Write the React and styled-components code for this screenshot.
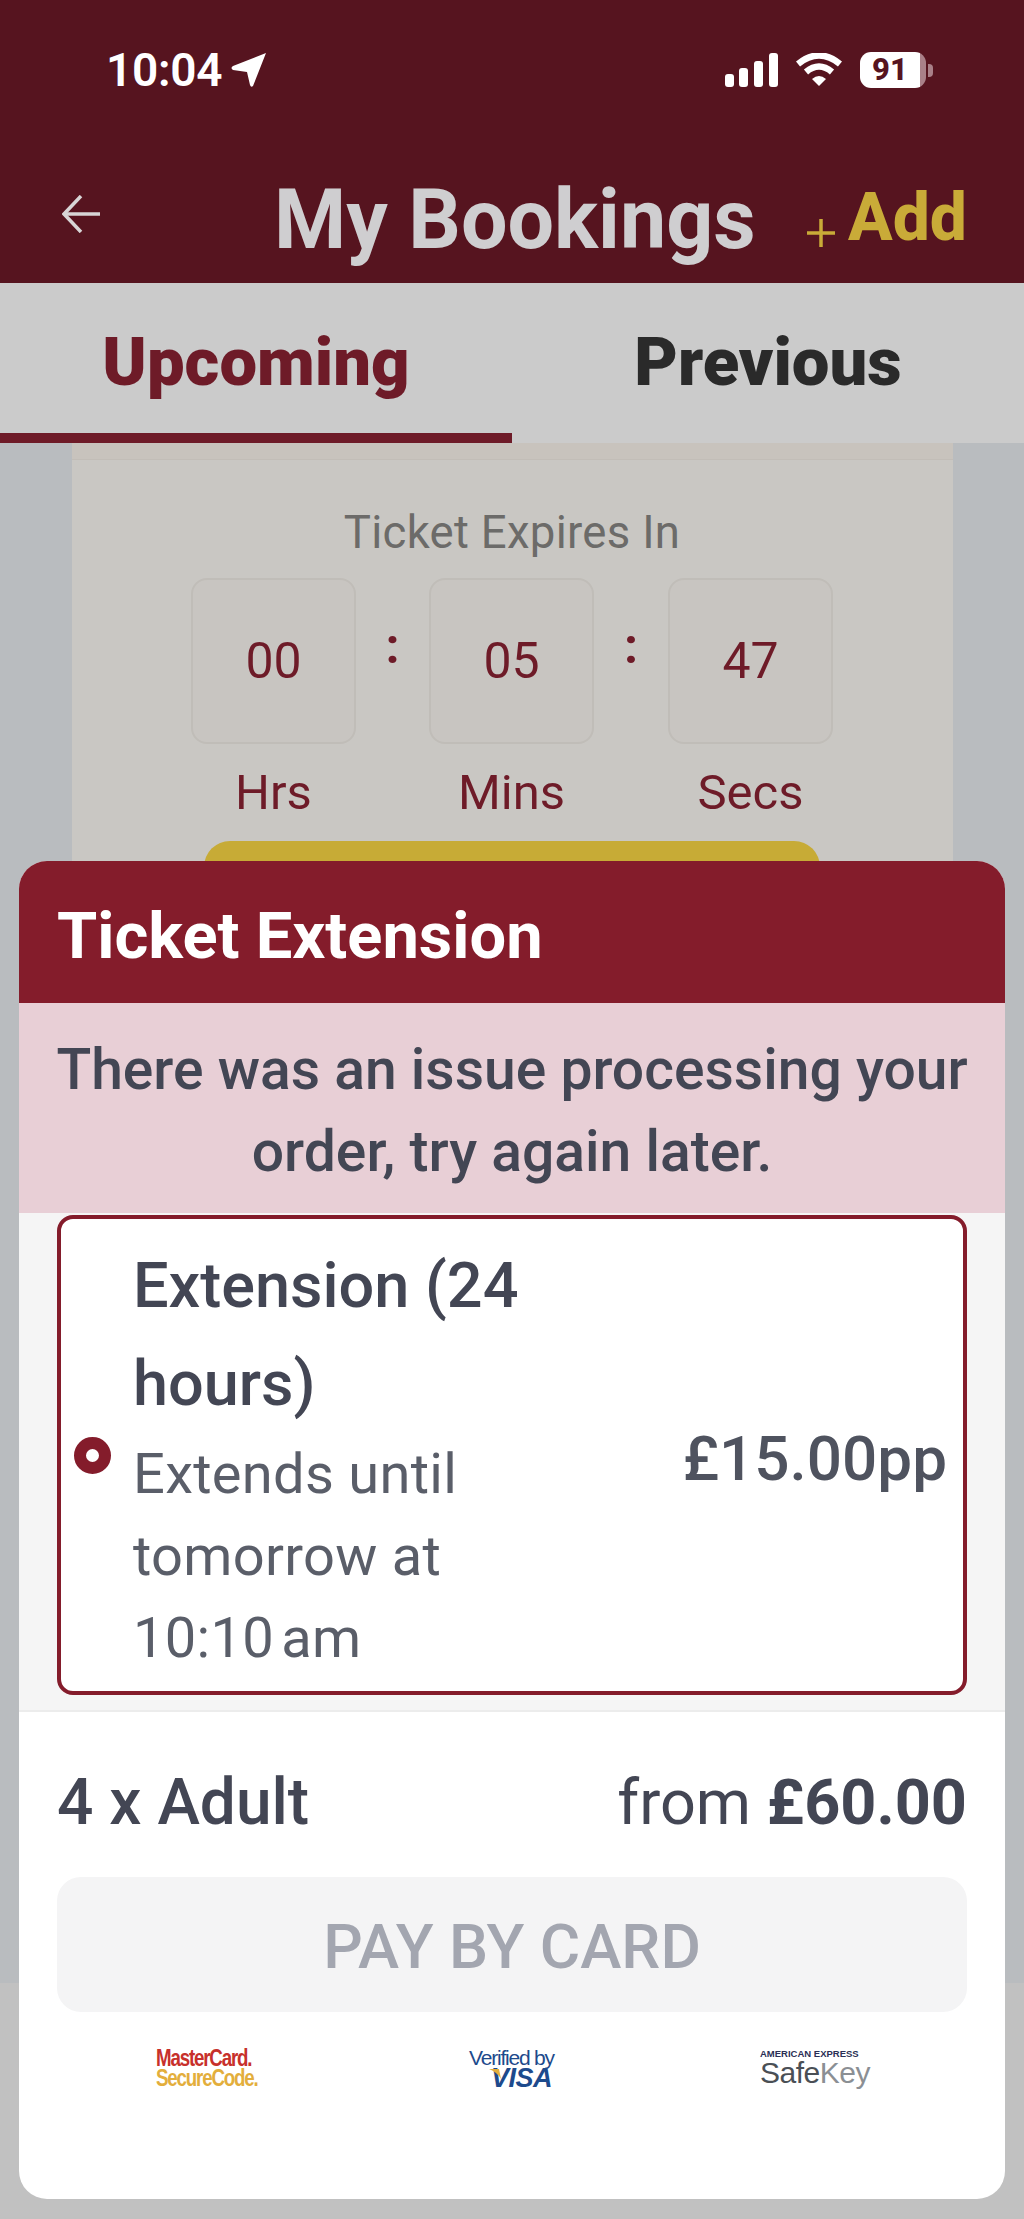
import styled, { createGlobalStyle } from "styled-components";

const GlobalStyle = createGlobalStyle`
  html, body {
    margin: 0;
    padding: 0;
    background: #b9bcbf;
  }
  * {
    box-sizing: border-box;
  }
`;

const FONT = `Roboto, "Liberation Sans", sans-serif`;

const Page = styled.div`
  position: relative;
  width: 1024px;
  height: 2219px;
  display: flex;
  flex-direction: column;
  overflow: hidden;
  background: #b9bcbf;
  font-family: ${FONT};
`;

const Header = styled.header`
  height: 283px;
  padding: 51px 57px 0 62px;
  background: #56141f;
  display: flex;
  flex-direction: column;
`;

const StatusBar = styled.div`
  height: 38px;
  margin-left: 44px;
  margin-right: 34px;
  display: flex;
  align-items: center;
  justify-content: space-between;
`;

const Clock = styled.div`
  display: flex;
  align-items: center;
  gap: 9px;
  color: #fff;
  font-size: 46px;
  font-weight: 600;
  letter-spacing: -0.3px;
`;

const StatusIcons = styled.div`
  display: flex;
  align-items: center;
  gap: 18px;
`;

const Battery = styled.div`
  display: flex;
  align-items: center;
  gap: 2px;
`;

const BatteryBody = styled.div`
  width: 66px;
  height: 36px;
  border-radius: 11px;
  background: linear-gradient(90deg, #fff 91%, #a98088 91%);
  color: #56141f;
  font-size: 31px;
  font-weight: 800;
  line-height: 36px;
  text-align: center;
  padding-right: 6px;
`;

const BatteryNub = styled.div`
  width: 5px;
  height: 13px;
  border-radius: 0 4px 4px 0;
  background: #a98088;
`;

const NavRow = styled.div`
  margin-top: 83px;
  display: flex;
  align-items: center;
`;

const BackButton = styled.div`
  width: 38px;
  height: 38px;
  margin-top: -12px;
  color: #d8d5d6;
`;

const Title = styled.h1`
  margin: 0 0 0 174px;
  color: #cfced0;
  font-size: 82.5px;
  font-weight: 700;
  line-height: 96px;
  white-space: nowrap;
`;

const AddButton = styled.div`
  margin-left: auto;
  display: flex;
  align-items: flex-end;
  gap: 13px;
  color: #c9ab38;
  font-size: 66px;
  font-weight: 800;
  line-height: 76px;
  margin-top: -4px;
`;

const PlusIcon = styled.svg`
  width: 28px;
  height: 28px;
  margin-bottom: 9px;
`;

const Tabs = styled.nav`
  height: 160px;
  display: flex;
  background: #cbcbcb;
`;

const Tab = styled.div`
  width: 512px;
  padding-top: 40px;
  text-align: center;
  color: ${(props) => (props.$active ? "#6e1b28" : "#2a2a2a")};
  border-bottom: 10px solid ${(props) => (props.$active ? "#6e1b28" : "transparent")};
  font-size: 67px;
  font-weight: 900;
  line-height: 78px;
`;

const Ticket = styled.section`
  width: 881px;
  height: 440px;
  margin: 0 auto;
  background: #c9c7c3;
  border-top: 16px solid #c8c3bd;
  display: flex;
  flex-direction: column;
  align-items: center;
  position: relative;
`;

const TicketRule = styled.div`
  align-self: stretch;
  height: 2px;
  background: #c2bdb7;
`;

const ExpiresLabel = styled.div`
  margin-top: 46px;
  color: #6c6b69;
  font-size: 45.5px;
  font-weight: 400;
  line-height: 54px;
  letter-spacing: 0.3px;
`;

const Countdown = styled.div`
  margin-top: 18px;
  display: grid;
  grid-template-columns: 165px 73px 165px 74px 165px;
  justify-items: center;
`;

const TimeBox = styled.div`
  width: 165px;
  height: 166px;
  border: 2px solid #c0bdb8;
  border-radius: 16px;
  background: #c8c5c1;
  color: #6e1b28;
  font-size: 50px;
  font-weight: 400;
  display: flex;
  align-items: center;
  justify-content: center;
`;

const Colon = styled.div`
  color: #6e1b28;
  font-size: 50px;
  font-weight: 700;
  line-height: 136px;
`;

const TimeLabel = styled.div`
  grid-row: 2;
  grid-column: ${(props) => props.$column};
  margin-top: 20px;
  color: #6e1b28;
  font-size: 49px;
  font-weight: 400;
  line-height: 58px;
`;

const RenewButton = styled.div`
  width: 616px;
  height: 60px;
  margin-top: 19px;
  border-radius: 26px 26px 0 0;
  background: #c7ab36;
`;

const BottomBand = styled.div`
  margin-top: auto;
  height: 236px;
  background: #c1c1c1;
`;

const Sheet = styled.div`
  position: absolute;
  left: 19px;
  top: 861px;
  width: 986px;
  height: 1338px;
  border-radius: 28px;
  overflow: hidden;
  background: #fff;
`;

const SheetHeader = styled.div`
  height: 142px;
  padding: 0 38px;
  background: #841c2b;
  color: #fff;
  font-size: 65px;
  font-weight: 700;
  line-height: 150px;
`;

const ErrorBanner = styled.div`
  height: 210px;
  padding-top: 26px;
  background: #e8cfd6;
  color: #434654;
  font-size: 57px;
  font-weight: 500;
  line-height: 82px;
  text-align: center;
`;

const Options = styled.div`
  height: 499px;
  padding: 2px 38px 0;
  background: #f5f5f5;
  border-bottom: 2px solid #ececec;
`;

const OptionCard = styled.div`
  height: 480px;
  padding: 6px 16px 0 13px;
  border: 4px solid #841c2b;
  border-radius: 16px;
  background: #fff;
  display: flex;
  align-items: center;
`;

const Radio = styled.div`
  flex: none;
  width: 37px;
  height: 37px;
  margin: -6px 22px 0 0;
  border: 12px solid #841c2b;
  border-radius: 50%;
  background: #fff;
`;

const OptionText = styled.div`
  width: 400px;
`;

const OptionName = styled.div`
  color: #434654;
  font-size: 63px;
  font-weight: 500;
  line-height: 98px;
`;

const OptionDetail = styled.div`
  color: #5a5e69;
  font-size: 56px;
  font-weight: 400;
  line-height: 82px;
  letter-spacing: 0.3px;
`;

const Price = styled.div`
  margin-left: auto;
  color: #4f535f;
  font-size: 62px;
  font-weight: 500;
`;

const Footer = styled.div`
  padding: 0 38px;
`;

const TotalRow = styled.div`
  height: 165px;
  padding-top: 16px;
  display: flex;
  align-items: center;
  justify-content: space-between;
  color: #434654;
  font-size: 64px;
  font-weight: 500;
`;

const TotalPrice = styled.div`
  font-size: 63px;
  font-weight: 400;

  b {
    font-weight: 700;
  }
`;

const PayButton = styled.div`
  height: 135px;
  padding-top: 4px;
  border-radius: 24px;
  background: #f4f4f5;
  color: #a3a6b0;
  font-size: 62px;
  font-weight: 500;
  display: flex;
  align-items: center;
  justify-content: center;
`;

const SchemeLogos = styled.div`
  margin-top: 36px;
  padding-left: 99px;
  display: grid;
  grid-template-columns: 313px 291px auto;
`;

const MasterCardLogo = styled.div`
  font-family: "Liberation Sans", sans-serif;
  font-size: 24px;
  font-weight: 700;
  line-height: 20px;
  letter-spacing: -1.5px;
  color: #c7302b;
  transform-origin: left center;
  transform: scaleX(0.78);

  span {
    display: block;
    color: #e3ae3c;
  }
`;

const VisaLogo = styled.div`
  position: relative;
  width: 86px;
  font-family: "Liberation Sans", sans-serif;
  font-size: 21px;
  line-height: 20px;
  letter-spacing: -1.2px;
  color: #1d4a8c;
  white-space: nowrap;

  b {
    display: block;
    padding-left: 22px;
    font-size: 27px;
    font-style: italic;
    letter-spacing: -0.5px;
  }

  svg {
    position: absolute;
    left: 20px;
    top: 21px;
  }
`;

const SafeKeyLogo = styled.div`
  font-family: "Liberation Sans", sans-serif;
  color: #4a4f55;
  white-space: nowrap;

  small {
    display: block;
    font-size: 9.5px;
    font-weight: 700;
    line-height: 11px;
    color: #2a2f55;
  }

  span {
    display: block;
    font-size: 30px;
    line-height: 28px;
    letter-spacing: -0.5px;
  }

  i {
    font-style: normal;
    font-weight: 300;
    color: #8b8f94;
  }
`;

const App = () => {
  return (
    <>
      <GlobalStyle />
      <Page>
        <Header>
          <StatusBar>
            <Clock>
              10:04
              <svg width="36" height="36" viewBox="0 0 36 36">
                <path d="M35 1 L22 34 Q20 36 19 33 L16 20 L2 18 Q-1 16 2 14 Z" fill="#fff" />
              </svg>
            </Clock>
            <StatusIcons>
              <svg width="53" height="34" viewBox="0 0 53 34" fill="#fff">
                <rect x="0" y="21" width="9" height="13" rx="3" />
                <rect x="14" y="15" width="9" height="19" rx="3" />
                <rect x="29" y="8" width="9" height="26" rx="3" />
                <rect x="44" y="0" width="9" height="34" rx="3" />
              </svg>
              <svg width="46" height="34" viewBox="0 0 46 34" fill="none" stroke="#fff" strokeWidth="6.5">
                <path d="M2 11 Q23 -6 44 11" />
                <path d="M10 19 Q23 8 36 19" />
                <path d="M16 26 L23 33 L30 26 Q23 20 16 26 Z" fill="#fff" stroke="none" />
              </svg>
              <Battery>
                <BatteryBody>91</BatteryBody>
                <BatteryNub />
              </Battery>
            </StatusIcons>
          </StatusBar>
          <NavRow>
            <BackButton>
              <svg width="38" height="38" viewBox="0 0 38 38" fill="none" stroke="currentColor" strokeWidth="3.5">
                <path d="M38 19 H3" />
                <path d="M19 1 L2 19 L19 37" />
              </svg>
            </BackButton>
            <Title>My Bookings</Title>
            <AddButton>
              <PlusIcon viewBox="0 0 28 28" stroke="#c9ab38" strokeWidth="3.5">
                <path d="M0 14 H28 M14 0 V28" />
              </PlusIcon>
              Add
            </AddButton>
          </NavRow>
        </Header>

        <Tabs>
          <Tab $active>Upcoming</Tab>
          <Tab>Previous</Tab>
        </Tabs>

        <Ticket>
          <TicketRule />
          <ExpiresLabel>Ticket Expires In</ExpiresLabel>
          <Countdown>
            <TimeBox>00</TimeBox>
            <Colon>:</Colon>
            <TimeBox>05</TimeBox>
            <Colon>:</Colon>
            <TimeBox>47</TimeBox>
            <TimeLabel $column={1}>Hrs</TimeLabel>
            <TimeLabel $column={3}>Mins</TimeLabel>
            <TimeLabel $column={5}>Secs</TimeLabel>
          </Countdown>
          <RenewButton />
        </Ticket>

        <BottomBand />

        <Sheet>
          <SheetHeader>Ticket Extension</SheetHeader>
          <ErrorBanner>
            There was an issue processing your
            <br />
            order, try again later.
          </ErrorBanner>
          <Options>
            <OptionCard>
              <Radio />
              <OptionText>
                <OptionName>Extension (24 hours)</OptionName>
                <OptionDetail>Extends until tomorrow at 10:10{"\u202f"}am</OptionDetail>
              </OptionText>
              <Price>£15.00pp</Price>
            </OptionCard>
          </Options>
          <Footer>
            <TotalRow>
              <div>4 x Adult</div>
              <TotalPrice>
                from <b>£60.00</b>
              </TotalPrice>
            </TotalRow>
            <PayButton>PAY BY CARD</PayButton>
            <SchemeLogos>
              <MasterCardLogo>
                MasterCard.
                <span>SecureCode.</span>
              </MasterCardLogo>
              <VisaLogo>
                Verified by
                <svg width="12" height="10" viewBox="0 0 12 10">
                  <path d="M0 0 H10 L12 10 Q8 3 0 0 Z" fill="#e3ae3c" />
                </svg>
                <b>VISA</b>
              </VisaLogo>
              <SafeKeyLogo>
                <small>AMERICAN EXPRESS</small>
                <span>
                  Safe<i>Key</i>
                </span>
              </SafeKeyLogo>
            </SchemeLogos>
          </Footer>
        </Sheet>
      </Page>
    </>
  );
};

export default App;
